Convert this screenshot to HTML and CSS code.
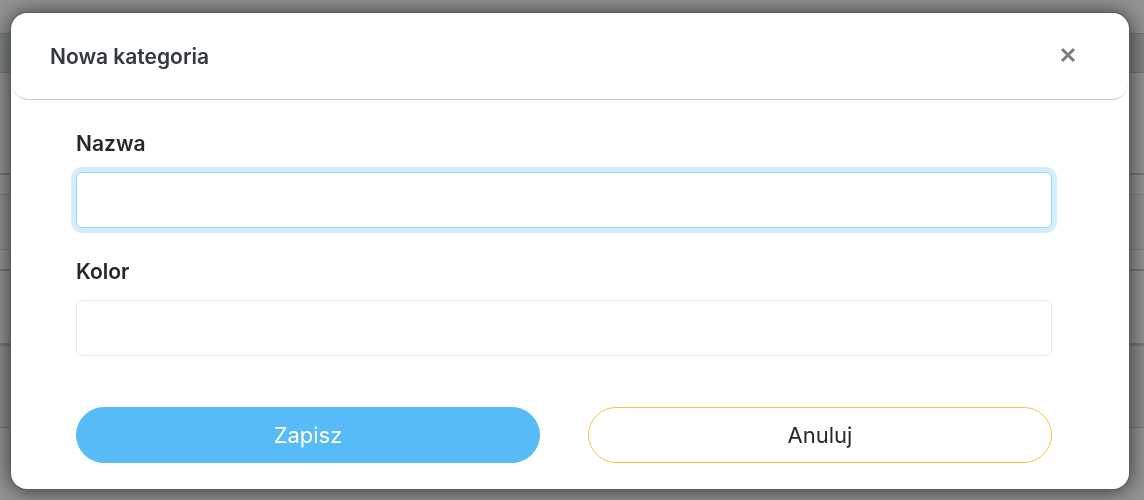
FILE: index.html
```html
<!DOCTYPE html>
<html lang="pl">
<head>
    <meta charset="UTF-8">
    <meta name="viewport" content="width=device-width, initial-scale=1.0">
    <title>Nowa kategoria</title>
    <link rel="stylesheet" href="styles.css">
</head>
<body>

<!-- Przyciemniona strona pod oknem -->
<div class="page">
    <div class="page-top"></div>
    <div class="page-toolbar"></div>
    <div class="page-intro"></div>
    <div class="page-head"></div>
    <div class="page-row"></div>
    <div class="page-head page-head-end"></div>
    <div class="page-summary"></div>
    <div class="page-footer"></div>
</div>

<div class="modal-overlay">
    <div class="modal" role="dialog" aria-modal="true" aria-labelledby="modalTitle">
        <div class="modal-header">
            <h1 id="modalTitle">Nowa kategoria</h1>
            <button type="button" class="close-btn" aria-label="Zamknij">
                <svg width="16" height="16" viewBox="0 0 16 16" aria-hidden="true">
                    <path d="M2 2L14 14M14 2L2 14"/>
                </svg>
            </button>
        </div>
        <form class="modal-body">
            <div class="field">
                <label for="name">Nazwa</label>
                <input type="text" id="name" class="active">
            </div>
            <div class="field">
                <label for="color">Kolor</label>
                <input type="text" id="color">
            </div>
            <div class="buttons">
                <button type="submit" class="btn btn-save">Zapisz</button>
                <button type="button" class="btn btn-cancel">Anuluj</button>
            </div>
        </form>
    </div>
</div>

</body>
</html>
```
FILE: styles.css
```css
* {
    box-sizing: border-box;
}
body {
    margin: 0;
    font-family: Inter, "Liberation Sans", sans-serif;
    font-size: 22px;
    color: #25282c;
    background-color: #949494;
}

/* Strona w tle */
.page {
    height: 100vh;
    overflow: hidden;
}
.page-top {
    height: 33px;
}
.page-toolbar {
    height: 40px;
    background-color: #828584;
    border-top: 1px solid #737474;
    border-bottom: 1px solid #737474;
}
.page-intro {
    height: 100px;
}
.page-head {
    height: 22px;
    border-top: 2px solid #777;
    border-bottom: 1px solid #808080;
}
.page-row {
    height: 54px;
    background-color: #919191;
}
.page-head-end {
    border-top: 1px solid #808080;
    border-bottom: 2px solid #777;
}
.page-summary {
    height: 75px;
    border-bottom: 3px solid #777;
}
.page-footer {
    height: 82px;
    background-color: #8d8d8d;
    border-bottom: 1px solid #777;
}

/* Okno */
.modal-overlay {
    position: fixed;
    inset: 0;
    padding: 13px 15px 11px 11px;
}
.modal {
    min-height: 100%;
    background-color: white;
    border-radius: 16px;
    box-shadow: 0 0 1px 1px #52606e, 0 1px 22px rgba(0, 0, 0, 0.7);
}
.modal-header {
    display: flex;
    align-items: center;
    justify-content: space-between;
    height: 87px;
    margin: 0 1px;
    padding: 0 52px 0 38px;
    border-bottom: 1px solid #c8cccd;
    border-radius: 16px;
}
.modal-header h1 {
    margin: 0;
    font-size: 21px;
    font-weight: 600;
    color: #33393f;
}
.close-btn {
    display: flex;
    padding: 0 0 2px;
    border: none;
    background: none;
    cursor: pointer;
}
.close-btn svg {
    fill: none;
    stroke: #7c7c7c;
    stroke-width: 3;
}
.modal-body {
    padding: 28px 77px 26px 65px;
}
.field {
    margin-bottom: 28px;
}
.field label {
    display: block;
    margin-bottom: 12px;
    font-size: 21px;
    font-weight: 600;
    line-height: 32px;
}
.field input {
    display: block;
    width: 100%;
    height: 56px;
    padding: 0 16px;
    border: 1px solid #e4e5e9;
    border-radius: 6px;
    background-color: white;
    font: inherit;
    color: inherit;
    outline: none;
}
.field input:focus,
.field input.active {
    border-color: #9adaf7;
    box-shadow: 0 0 0 5px #d5edfc;
}
.buttons {
    display: grid;
    grid-template-columns: 1fr 1fr;
    gap: 48px;
    margin-top: 51px;
}
.btn {
    height: 56px;
    border: 1px solid #56bbf6;
    border-radius: 28px;
    font-family: inherit;
    font-size: 22px;
    cursor: pointer;
}
.btn-save {
    background-color: #56bbf6;
    color: white;
}
.btn-cancel {
    border-color: #f3c141;
    background-color: white;
    color: #25282c;
}
```
